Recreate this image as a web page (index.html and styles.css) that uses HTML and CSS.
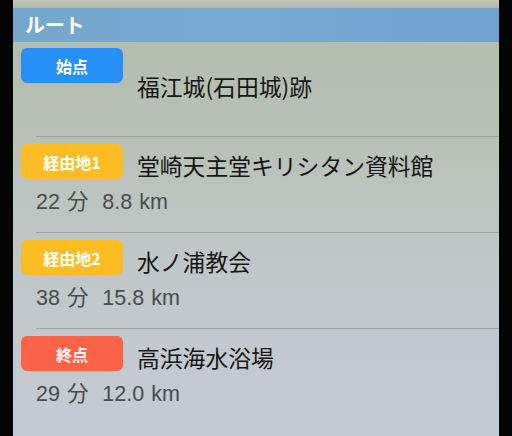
FILE: index.html
```html
<!DOCTYPE html>
<html lang="ja">
<head>
<meta charset="utf-8">
<link rel="stylesheet" href="styles.css">
</head>
<body>
<div class="screen">
  <div class="edge"></div>
  <div class="panel">
    <div class="topstrip"></div>
    <div class="header">ルート</div>
    <div class="list">
      <div class="row row-first">
        <div class="line">
          <span class="badge badge-start">始点</span>
          <span class="title title-first">福江城(石田城)跡</span>
        </div>
      </div>
      <div class="sep"></div>
      <div class="row">
        <div class="line">
          <span class="badge badge-via">経由地1</span>
          <span class="title">堂崎天主堂キリシタン資料館</span>
        </div>
        <div class="sub">22 分  8.8 km</div>
      </div>
      <div class="sep"></div>
      <div class="row">
        <div class="line">
          <span class="badge badge-via">経由地2</span>
          <span class="title">水ノ浦教会</span>
        </div>
        <div class="sub">38 分  15.8 km</div>
      </div>
      <div class="sep"></div>
      <div class="row">
        <div class="line">
          <span class="badge badge-end">終点</span>
          <span class="title">高浜海水浴場</span>
        </div>
        <div class="sub">29 分  12.0 km</div>
      </div>
    </div>
  </div>
  <div class="edge edge-right"></div>
</div>
</body>
</html>
```
FILE: styles.css
```css
html, body {
  margin: 0;
  padding: 0;
  background: #000;
}
.screen {
  display: flex;
  width: 512px;
  height: 436px;
  overflow: hidden;
  background: #000;
}
.edge {
  width: 13px;
  flex: none;
  background: #050505;
}
.edge-right {
  width: 13px;
}
.panel {
  width: 486px;
  flex: none;
  display: flex;
  flex-direction: column;
  background: linear-gradient(180deg, #b3bcab 0%, #b9c0b6 30%, #c1c7c8 60%, #c5cbd3 100%);
}
.topstrip {
  height: 8px;
  background: linear-gradient(180deg, #c3c6b6 0%, #b4b8a8 100%);
}
.header {
  height: 34px;
  box-sizing: border-box;
  padding-left: 12px;
  background: linear-gradient(90deg, #75a7cc 0%, #77aad2 50%, #6fa2d2 100%);
  color: #fff;
  font-family: "Noto Sans CJK JP", "Noto Sans", sans-serif;
  font-weight: 700;
  font-size: 20px;
  line-height: 33px;
  letter-spacing: -0.3px;
}
.list {
  display: flex;
  flex-direction: column;
}
.row {
  padding: 7px 0 16px 8px;
  display: flex;
  flex-direction: column;
}
.row-first {
  height: 94px;
  box-sizing: border-box;
  padding-top: 6px;
  padding-bottom: 0;
}
.line {
  display: flex;
  align-items: flex-start;
}
.badge {
  width: 102px;
  height: 35px;
  flex: none;
  border-radius: 6px;
  display: flex;
  align-items: center;
  justify-content: center;
  color: #fff;
  font-family: "Noto Sans CJK JP", "Noto Sans", sans-serif;
  font-weight: 600;
  font-size: 16px;
  line-height: 20px;
}
.badge-start { background: #2690f7; }
.badge-via { background: #fbbd23; }
.badge-end { background: #fb6348; }
.title {
  margin-left: 14px;
  margin-top: 8px;
  font-family: "Noto Sans CJK JP", "Noto Sans", sans-serif;
  font-size: 22.8px;
  line-height: 28px;
  color: #161616;
  white-space: nowrap;
}
.title-first {
  margin-top: 25px;
}
.sub {
  margin-top: 8px;
  margin-left: 15px;
  font-family: "Liberation Sans", "Noto Sans CJK JP", sans-serif;
  font-size: 21.5px;
  line-height: 28px;
  color: #4a4b4d;
  white-space: pre;
  word-spacing: 1px;
}
.sep {
  height: 1px;
  margin-left: 23px;
  background: #9ea3a5;
}
```
